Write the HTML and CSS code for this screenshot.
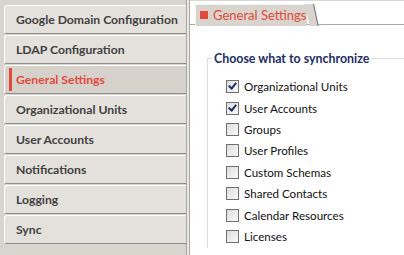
FILE: index.html
```html
<!DOCTYPE html>
<html lang="en">

<head>
    <meta charset="UTF-8">
    <title>General Settings</title>
    <link rel="stylesheet" href="styles.css">
</head>

<body>
    <div class="sidebar">
        <div class="nav-item">Google Domain Configuration</div>
        <div class="nav-item">LDAP Configuration</div>
        <div class="nav-item active">General Settings</div>
        <div class="nav-item">Organizational Units</div>
        <div class="nav-item">User Accounts</div>
        <div class="nav-item">Notifications</div>
        <div class="nav-item">Logging</div>
        <div class="nav-item">Sync</div>
    </div>

    <div class="splitter"></div>

    <div class="main">
        <div class="tab-bar">
            <div class="tab"><span class="tab-icon"></span>General Settings</div>
        </div>

        <fieldset class="group">
            <legend>Choose what to synchronize</legend>
            <label class="check checked"><span class="box"></span>Organizational Units</label>
            <label class="check checked"><span class="box"></span>User Accounts</label>
            <label class="check"><span class="box"></span>Groups</label>
            <label class="check"><span class="box"></span>User Profiles</label>
            <label class="check"><span class="box"></span>Custom Schemas</label>
            <label class="check"><span class="box"></span>Shared Contacts</label>
            <label class="check"><span class="box"></span>Calendar Resources</label>
            <label class="check"><span class="box"></span>Licenses</label>
        </fieldset>
    </div>
</body>

</html>
```

FILE: styles.css
```css
body {
    margin: 0;
    padding: 0;
    width: 404px;
    height: 255px;
    overflow: hidden;
    display: flex;
    font-family: Lato, "Open Sans", sans-serif;
    background-color: #fff;
}

.sidebar {
    width: 182px;
    padding: 5px 0 0 4px;
    background-color: #d8d4ce;
    flex-shrink: 0;
}

.nav-item {
    height: 27px;
    line-height: 28px;
    margin-bottom: 1px;
    padding-left: 11px;
    background-color: #e4e1dc;
    border-top: 1px solid #fff;
    border-left: 1px solid #fff;
    border-bottom: 1px solid #8c8c8c;
    border-radius: 3px 0 0 3px;
    color: #404040;
    font-size: 12.2px;
    font-weight: 700;
    white-space: nowrap;
    position: relative;
}

.nav-item.active {
    background-color: #d6d2cb;
    color: #e2493b;
}

.nav-item.active::before {
    content: '';
    position: absolute;
    left: 4px;
    top: 2px;
    bottom: 2px;
    width: 3px;
    background-color: #e2493b;
}

.splitter {
    width: 2px;
    flex-shrink: 0;
    background-color: #ece9e4;
    border-left: 1px solid #a8a6a2;
    border-right: 1px solid #a8a6a2;
}

.main {
    flex: 1;
    min-width: 0;
    border-top: 1px solid #d8d8d8;
}

.tab-bar {
    height: 21px;
    padding: 2px 0 0 5px;
    border-bottom: 1px solid #a9a9a9;
}

.tab {
    position: relative;
    display: inline-flex;
    align-items: center;
    box-sizing: border-box;
    height: 22px;
    padding: 0 1px 0 4px;
    background-color: #d9d5ce;
    border-top: 1px solid #f4f4f4;
    border-left: 1px solid #f4f4f4;
    color: #e2493b;
    font-size: 13px;
    white-space: nowrap;
}

.tab::after {
    content: '';
    position: absolute;
    top: -1px;
    right: -7px;
    width: 8px;
    height: 22px;
    background-color: #d9d5ce;
    border-right: 1px solid #6f6f6f;
    transform: skewX(12deg);
    transform-origin: top;
}

.tab-icon {
    width: 8px;
    height: 8px;
    margin-right: 5px;
    background-color: #e2493b;
}

.group {
    margin: 26px 0 0 17px;
    padding: 10px 0 0 4px;
    border: 1px solid #dcdcdc;
    border-right: none;
    border-bottom: none;
    height: 186px;
}

.group legend {
    padding: 0 2px;
    margin-left: 0;
    color: #1c2e6a;
    font-size: 12.4px;
    font-weight: 700;
    white-space: nowrap;
}

.check {
    display: flex;
    align-items: center;
    height: 21.4px;
    margin-left: 14px;
    color: #111;
    font-size: 11.6px;
    white-space: nowrap;
}

.box {
    position: relative;
    width: 11px;
    height: 11px;
    margin-right: 5px;
    border: 1px solid #707070;
    background: linear-gradient(135deg, #dcdcdc, #fafafa);
}

.check.checked .box::after {
    content: '';
    position: absolute;
    left: 3px;
    top: 0;
    width: 3px;
    height: 6px;
    border-right: 2px solid #1d2b6a;
    border-bottom: 2px solid #1d2b6a;
    transform: rotate(40deg);
}
```
